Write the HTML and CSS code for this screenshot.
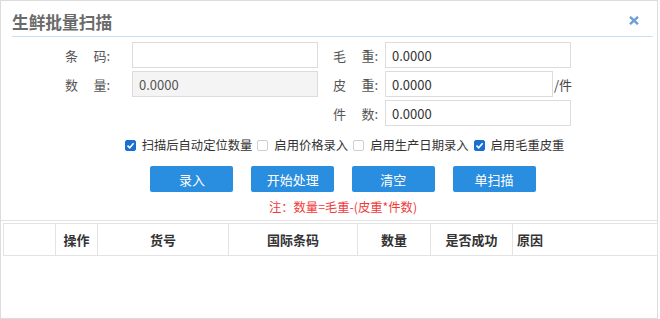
FILE: index.html
```html
<!DOCTYPE html>
<html lang="zh-CN">
<head>
<meta charset="utf-8">
<title>生鲜批量扫描</title>
<link rel="stylesheet" href="styles.css">
</head>
<body>
<div class="dialog">
  <div class="header">
    <span class="title">生鲜批量扫描</span>
    <span class="close"><svg width="10" height="9" viewBox="0 0 10 9"><path d="M1 0.8 L9 8.2 M9 0.8 L1 8.2" stroke="#6e9fd6" stroke-width="2.4" fill="none"/></svg></span>
  </div>
  <div class="form">
    <div class="col left">
      <div class="field"><label class="lbl"><span>条</span><span>码:</span></label><input class="inp" type="text" value=""></div>
      <div class="field"><label class="lbl"><span>数</span><span>量:</span></label><input class="inp disabled" type="text" value="0.0000" readonly></div>
    </div>
    <div class="col right">
      <div class="field"><label class="lbl"><span>毛</span><span>重:</span></label><input class="inp" type="text" value="0.0000"></div>
      <div class="field"><label class="lbl"><span>皮</span><span>重:</span></label><input class="inp short" type="text" value="0.0000"><span class="suffix">/件</span></div>
      <div class="field"><label class="lbl"><span>件</span><span>数:</span></label><input class="inp" type="text" value="0.0000"></div>
    </div>
  </div>
  <div class="actions">
    <div class="checks">
      <span class="chk"><span class="cb on"><svg width="9" height="9" viewBox="0 0 9 9"><path d="M1.5 4.6 L3.7 6.8 L7.6 2.2" stroke="#fff" stroke-width="1.6" fill="none"/></svg></span>扫描后自动定位数量</span>
      <span class="chk"><span class="cb"></span>启用价格录入</span>
      <span class="chk"><span class="cb"></span>启用生产日期录入</span>
      <span class="chk"><span class="cb on"><svg width="9" height="9" viewBox="0 0 9 9"><path d="M1.5 4.6 L3.7 6.8 L7.6 2.2" stroke="#fff" stroke-width="1.6" fill="none"/></svg></span>启用毛重皮重</span>
    </div>
    <div class="buttons">
      <button class="btn">录入</button>
      <button class="btn">开始处理</button>
      <button class="btn">清空</button>
      <button class="btn">单扫描</button>
    </div>
    <div class="note">注：数量=毛重-(皮重*件数)</div>
  </div>
  <div class="grid-wrap">
    <table class="grid">
      <colgroup>
        <col class="c0"><col class="c1"><col class="c2"><col class="c3"><col class="c4"><col class="c5"><col class="c6">
      </colgroup>
      <thead>
        <tr><th></th><th>操作</th><th>货号</th><th>国际条码</th><th>数量</th><th>是否成功</th><th class="left">原因</th></tr>
      </thead>
    </table>
  </div>
</div>
</body>
</html>
```
FILE: styles.css
```css
* { box-sizing: border-box; }
html, body { margin: 0; padding: 0; background: #fff; }
body {
  font-family: "Noto Sans CJK SC", "Noto Sans", "Liberation Sans", sans-serif;
  color: #333;
  width: 660px;
  height: 319px;
  overflow: hidden;
}
.dialog {
  width: 658px;
  height: 319px;
  border: 1px solid #dcdcdc;
  background: #fff;
}
.header {
  margin: 0 4px 0 11px;
  height: 36px;
  border-bottom: 1px solid #c9e2f3;
  display: flex;
  justify-content: space-between;
  align-items: flex-start;
}
.title {
  padding-top: 9px;
  line-height: 24px;
  font-size: 16.7px;
  font-weight: bold;
  color: #6a6a6a;
}
.close {
  margin-top: 15px;
  margin-right: 14px;
  width: 10px;
  height: 9px;
  display: flex;
}
.form {
  margin-top: 5px;
  display: flex;
  padding-left: 64px;
  gap: 15px;
}
.col { display: flex; flex-direction: column; gap: 3px; }
.field { display: flex; align-items: center; height: 26px; }
.lbl {
  width: 45px;
  display: flex;
  justify-content: space-between;
  font-size: 13px;
  color: #555;
}
.left .lbl { margin-right: 22px; }
.right .lbl { margin-right: 7px; }
.inp {
  width: 186px;
  height: 26px;
  border: 1px solid #dcdcdc;
  padding: 0 6px;
  font-family: inherit;
  font-size: 13px;
  color: #333;
  background: #fff;
  outline: none;
}
.inp.short { width: 168px; }
.inp.disabled { background: #f4f4f4; color: #555; }
.suffix { font-size: 13px; color: #444; margin-left: 1px; }
.actions { padding-left: 28px; }
.checks {
  margin-top: 9px;
  padding-left: 8px;
  height: 20px;
  display: flex;
  justify-content: center;
  align-items: center;
  font-size: 12.3px;
  color: #333;
}
.chk { display: inline-flex; align-items: center; margin-right: 5px; }
.cb {
  width: 11px;
  height: 11px;
  border: 1px solid #cfcfcf;
  border-radius: 2px;
  background: #fff;
  margin-right: 6px;
  display: inline-flex;
  align-items: center;
  justify-content: center;
}
.cb.on { background: #1b6fd0; border-color: #1b6fd0; }
.buttons {
  margin-top: 11px;
  display: flex;
  justify-content: center;
  gap: 17.7px;
}
.btn {
  width: 83px;
  height: 26px;
  border: none;
  border-radius: 2px;
  background: #2a8ee0;
  color: #fff;
  font-family: inherit;
  font-size: 13px;
  padding: 0;
}
.note {
  margin-top: 6px;
  line-height: 18px;
  text-align: center;
  font-size: 12.3px;
  color: #f23a3a;
}
.grid-wrap {
  margin-top: 4px;
  border-top: 1px solid #e2e2e2;
  padding: 2px 0 0 2px;
}
.grid {
  border-collapse: collapse;
  table-layout: fixed;
  width: 654px;
}
.c0 { width: 52px; }
.c1 { width: 42px; }
.c2 { width: 131px; }
.c3 { width: 129px; }
.c4 { width: 73px; }
.c5 { width: 82px; }
.c6 { width: 145px; }
.grid th {
  height: 32px;
  border: 1px solid #e3e3e3;
  font-size: 13px;
  font-weight: bold;
  color: #333;
  text-align: center;
  padding: 0;
}
.grid th.left { text-align: left; padding-left: 4px; }
```
